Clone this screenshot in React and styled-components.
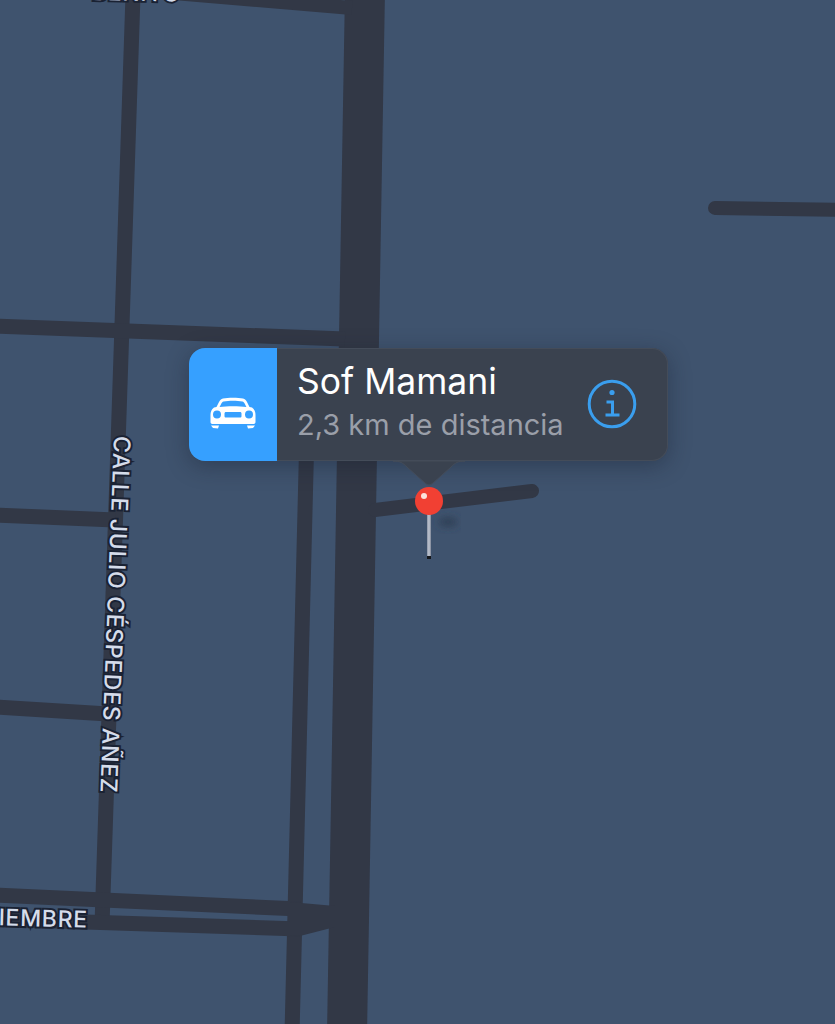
import React from "react";
import styled, { createGlobalStyle } from "styled-components";

const Global = createGlobalStyle`
  html, body { margin: 0; padding: 0; background: #3f536e; }
  body { font-family: "Inter", "Liberation Sans", sans-serif; }
`;

const Map = styled.main`
  position: relative;
  width: 835px;
  height: 1024px;
  overflow: hidden;
  background: #3f536e;
`;

const RoadLayer = styled.svg`
  display: block;
  width: 835px;
  height: 1024px;
`;

const StreetLabel = styled.span`
  position: absolute;
  left: ${(p) => p.$x}px;
  top: ${(p) => p.$y}px;
  transform-origin: 0 50%;
  transform: rotate(${(p) => p.$angle}deg);
  font-family: "Inter", "Liberation Sans", sans-serif;
  font-size: ${(p) => p.$size}px;
  font-weight: 500;
  line-height: 24px;
  letter-spacing: ${(p) => p.$spacing}px;
  white-space: nowrap;
  color: #d5dcea;
  -webkit-text-stroke: 4px #1a2233;
  paint-order: stroke fill;
`;

const Marker = styled.div`
  position: absolute;
  left: 189px;
  top: 348px;
  width: 479px;
`;

const Callout = styled.section`
  position: relative;
  display: flex;
  height: 113px;
  border-radius: 16px;
  overflow: hidden;
  background: #3a424f;
  box-shadow: inset 0 0 0 1px #444c59;
`;

const Shadow = styled.div`
  position: absolute;
  inset: 0;
  border-radius: 16px;
  box-shadow: 0 5px 22px rgba(20, 28, 44, 0.38);
`;

const TransportTile = styled.div`
  flex: 0 0 88px;
  display: flex;
  align-items: center;
  justify-content: center;
  padding-top: 17px;
  box-sizing: border-box;
  background: #36a0ff;
`;

const Details = styled.div`
  flex: 1;
  display: flex;
  flex-direction: column;
  justify-content: flex-start;
  padding: 12px 0 0 20px;
  min-width: 0;
`;

const Title = styled.h1`
  margin: 0;
  font-size: 35.5px;
  font-weight: 400;
  line-height: 44px;
  color: #ffffff;
`;

const Subtitle = styled.p`
  margin: 0;
  font-size: 29px;
  font-weight: 400;
  line-height: 42px;
  color: #9a9fa9;
`;

const InfoButton = styled.button`
  flex: 0 0 auto;
  align-self: flex-start;
  width: 50px;
  height: 50px;
  margin: 31px 31px 0 0;
  padding: 0;
  border: 0;
  background: none;
`;

const Pointer = styled.svg`
  position: absolute;
  left: 204px;
  top: 112px;
`;

const Pin = styled.svg`
  position: absolute;
  left: 222px;
  top: 138px;
`;

const roads = [
  { d: "M365 -10 L347 1034", w: 40 },
  { d: "M150 -9 L352 8", w: 14 },
  { d: "M133 -5 L102 925", w: 15 },
  { d: "M-5 326 L345 339", w: 15 },
  { d: "M-5 515 L115 520", w: 15 },
  { d: "M-5 707 L108 714", w: 15 },
  { d: "M309 350 L292 1034", w: 15 },
  { d: "M-5 895 L300 909", w: 15 },
  { d: "M-5 919 L300 929", w: 15 },
  { d: "M375 510 L532 491", w: 14, round: true },
  { d: "M715 208 L845 210", w: 14, round: true },
];

function CarIcon() {
  return (
    <svg width="46" height="32" viewBox="0 0 46 32" aria-hidden="true">
      <path
        fill="#fff"
        fillRule="evenodd"
        d="M13 1.5 C18 0.4 28 0.4 33 1.5 C35 2 36 3 37 5 L39.5 10 L42 10.5 C44.5 12 45.5 15 45.5 18 L45.5 25 C45.5 26.5 44.5 27 43 27 L3 27 C1.5 27 0.5 26.5 0.5 25 L0.5 18 C0.5 15 1.5 12 4 10.5 L6.5 10 L9 5 C10 3 11 2 13 1.5 Z
           M13.5 4.5 C12.5 4.8 12 5.4 11.5 6.3 L9.6 10 C17 9 29 9 36.4 10 L34.5 6.3 C34 5.4 33.5 4.8 32.5 4.5 C27 3.6 19 3.6 13.5 4.5 Z
           M7 13.5 A4 4 0 1 0 7 21.5 A4 4 0 1 0 7 13.5 Z
           M39 13.5 A4 4 0 1 0 39 21.5 A4 4 0 1 0 39 13.5 Z
           M16 15 C15 15 14.5 15.6 14.5 16.5 L14.5 19 C14.5 20 15 20.5 16 20.5 L30 20.5 C31 20.5 31.5 20 31.5 19 L31.5 16.5 C31.5 15.6 31 15 30 15 Z"
      />
      <path fill="#fff" d="M1 28.5 L9 28.5 L8 31.5 L3 31 Z M37 28.5 L45 28.5 L43 31 L38 31.5 Z" />
    </svg>
  );
}

function InfoIcon() {
  return (
    <svg width="50" height="50" viewBox="0 0 50 50" aria-hidden="true">
      <circle cx="25" cy="25" r="22.8" fill="none" stroke="#3a9eee" strokeWidth="3" />
      <circle cx="25" cy="13.5" r="2.6" fill="#3a9eee" />
      <path
        d="M19.5 23 H25.5 V35.5 M18.5 36 H32.5"
        fill="none"
        stroke="#3a9eee"
        strokeWidth="3"
      />
    </svg>
  );
}

export default function App() {
  return (
    <Map>
      <Global />
      <RoadLayer viewBox="0 0 835 1024" aria-hidden="true">
        <g fill="none" stroke="#323846">
          {roads.map((r) => (
            <path key={r.d} d={r.d} strokeWidth={r.w} strokeLinecap={r.round ? "round" : "butt"} />
          ))}
        </g>
        <path d="M290 902 L335 906 L335 927 L300 936 L290 935 Z" fill="#323846" />
      </RoadLayer>

      <StreetLabel $x={92} $y={-20} $angle={1} $size={23} $spacing={0.7}>
        BENITO
      </StreetLabel>
      <StreetLabel $x={-54} $y={904} $angle={1.5} $size={23} $spacing={0.7}>
        NOVIEMBRE
      </StreetLabel>
      <StreetLabel $x={122} $y={424} $angle={92.2} $size={23} $spacing={0.7}>
        CALLE JULIO CÉSPEDES AÑEZ
      </StreetLabel>

      <Marker>
        <Shadow />
        <Pointer width="72" height="28" viewBox="0 0 72 28" aria-hidden="true">
          <path
            d="M0 1 C7 1 10 3 14 7 L32 23 C35 25.5 37 25.5 40 23 L58 7 C62 3 65 1 72 1 Z"
            fill="#3a424f"
            stroke="#444c59"
            strokeWidth="1"
          />
        </Pointer>
        <Callout>
          <TransportTile>
            <CarIcon />
          </TransportTile>
          <Details>
            <Title>Sof Mamani</Title>
            <Subtitle>2,3 km de distancia</Subtitle>
          </Details>
          <InfoButton aria-label="Información">
            <InfoIcon />
          </InfoButton>
        </Callout>
        <Pin width="50" height="76" viewBox="0 0 50 76" aria-hidden="true">
          <defs>
            <linearGradient id="stem" x1="0" x2="1" y1="0" y2="0">
              <stop offset="0" stopColor="#8a93a5" />
              <stop offset="0.5" stopColor="#c2c8d3" />
              <stop offset="1" stopColor="#7c8495" />
            </linearGradient>
            <filter id="soft" x="-100%" y="-100%" width="300%" height="300%">
              <feGaussianBlur stdDeviation="4" />
            </filter>
          </defs>
          <ellipse cx="37" cy="36" rx="10" ry="4" fill="#2c3a50" filter="url(#soft)" />
          <rect x="16" y="28" width="4" height="43" fill="url(#stem)" />
          <rect x="16" y="70" width="4" height="3" fill="#15171c" />
          <circle cx="18" cy="15" r="14" fill="#f14033" />
          <circle cx="13" cy="10" r="3" fill="#fbe3dc" />
        </Pin>
      </Marker>
    </Map>
  );
}
